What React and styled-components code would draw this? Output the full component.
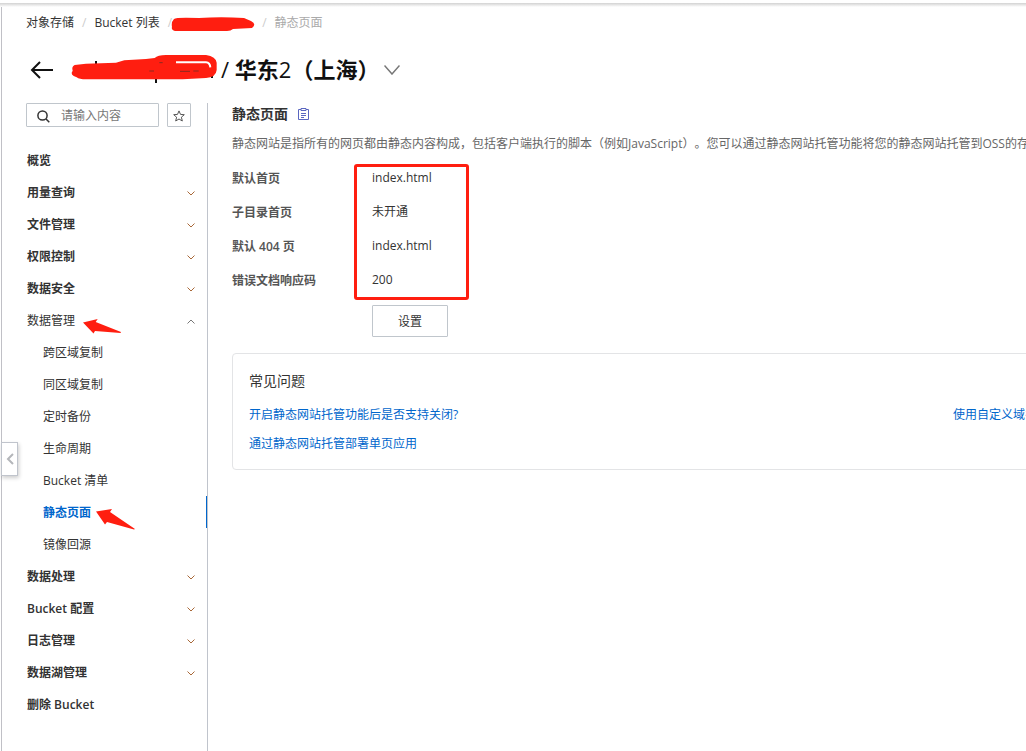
import styled, { createGlobalStyle } from "styled-components";

const GlobalStyle = createGlobalStyle`
  * {
    box-sizing: border-box;
  }
  body {
    margin: 0;
    background: #fff;
    color: #333;
    font-family: "Open Sans", "Noto Sans CJK SC", sans-serif;
    font-size: 12px;
    line-height: 18px;
    text-spacing-trim: space-all;
  }
  button, input {
    font-family: inherit;
    font-size: inherit;
    line-height: inherit;
    color: inherit;
  }
  h1, h2, h3, p, ul, ol, dl, dd {
    margin: 0;
    padding: 0;
  }
  ul, ol {
    list-style: none;
  }
`;

const Page = styled.div`
  position: relative;
  display: flex;
  flex-direction: column;
  min-height: 100vh;
  padding-top: 3px;
  overflow: hidden;
`;

const TopShadow = styled.div`
  height: 4px;
  background: linear-gradient(#d2d2d2, #fff);
`;

const Shell = styled.div`
  flex: 1;
  display: flex;
  flex-direction: column;
  margin-left: 1px;
  padding-left: 24px;
  border-left: 1px solid #c0c0c6;
`;

const Breadcrumb = styled.ol`
  display: flex;
  align-items: center;
  height: 30px;
  padding-top: 2px;
`;

const Crumb = styled.li`
  position: relative;
  color: ${(props) => (props.$current ? "#aaa" : "#333")};

  &:not(:first-child)::before {
    content: "/";
    margin: 0 8px;
    color: #ccc;
  }
`;

const CrumbLink = styled.a`
  color: inherit;
  text-decoration: none;
`;

const HiddenName = styled.span`
  display: inline-block;
  width: ${(props) => props.$width}px;
  height: 1px;
`;

const Header = styled.header`
  display: flex;
  align-items: center;
  height: 66px;
`;

const IconButton = styled.button`
  display: flex;
  align-items: center;
  justify-content: center;
  padding: 0;
  border: none;
  background: none;
  cursor: pointer;
`;

const BackButton = styled(IconButton)`
  width: 32px;
  height: 32px;
  color: #111;
`;

const Title = styled.h1`
  display: flex;
  align-items: center;
  margin-left: 12px;
  margin-right: 5px;
  padding-bottom: 2px;
  font-size: 22px;
  line-height: 32px;
  font-weight: 700;
  color: #111;
`;

const TitleLight = styled.span`
  font-weight: 400;
`;

const Body = styled.div`
  flex: 1;
  display: flex;
`;

const Sidebar = styled.aside`
  flex: 0 0 182px;
  border-right: 1px solid #c0c4cc;
`;

const SearchRow = styled.div`
  display: flex;
  gap: 8px;
  margin-bottom: 17px;
`;

const SearchBox = styled.label`
  display: flex;
  align-items: center;
  gap: 11px;
  width: 133px;
  height: 24px;
  padding-top: 2px;
  padding-left: 10px;
  border: 1px solid #c0c6cc;
  border-radius: 1px;
`;

const SearchInput = styled.input`
  flex: 1;
  min-width: 0;
  padding: 0;
  border: none;
  outline: none;
  background: none;

  &::placeholder {
    color: #777;
    opacity: 1;
  }
`;

const StarButton = styled(IconButton)`
  width: 24px;
  height: 24px;
  padding-top: 1px;
  border: 1px solid #c0c6cc;
  border-radius: 1px;
`;

const NavButton = styled.button`
  display: flex;
  align-items: center;
  justify-content: space-between;
  width: 100%;
  height: 32px;
  padding: 2px 12px 0 1px;
  border: none;
  background: none;
  text-align: left;
  font-weight: ${(props) => (props.$open ? 400 : 600)};
  cursor: pointer;
`;

const NavLink = styled.a`
  display: flex;
  align-items: center;
  height: 32px;
  padding-top: 2px;
  padding-left: ${(props) => (props.$child ? 17 : 1)}px;
  border-right: ${(props) => (props.$active ? "1px solid #06c" : "none")};
  color: ${(props) => (props.$active ? "#06c" : "#333")};
  font-weight: ${(props) => (props.$active || !props.$child ? 600 : 400)};
  text-decoration: none;
`;

const Marked = styled.span`
  position: relative;
`;

const Content = styled.main`
  flex: 1;
  min-width: 0;
  padding-left: 24px;
  overflow: hidden;
`;

const Wide = styled.div`
  width: 1442px;
`;

const SectionTitle = styled.h2`
  display: flex;
  align-items: center;
  gap: 10px;
  height: 22px;
  font-size: 14px;
  font-weight: 600;
`;

const Description = styled.p`
  margin-top: 10px;
  color: #666;
  white-space: nowrap;
`;

const Settings = styled.dl`
  position: relative;
  display: grid;
  grid-template-columns: 140px 1fr;
  row-gap: 15px;
  margin-top: 16px;
`;

const Term = styled.dt`
  padding-top: 1px;
  font-weight: 600;
  color: #555;
`;

const Frame = styled.div`
  position: absolute;
  top: -5px;
  bottom: -10px;
  left: 122px;
  width: 115px;
  border: 3px solid #ff1e10;
  border-radius: 3px;
  pointer-events: none;
`;

const SettingsButton = styled.button`
  display: block;
  width: 76px;
  height: 32px;
  margin: 15px 0 16px 140px;
  padding: 2px 0 0;
  border: 1px solid #c0c6cc;
  border-radius: 1px;
  background: #fff;
  cursor: pointer;
`;

const Faq = styled.section`
  padding: 17px 16px 16px;
  border: 1px solid #e3e4e6;
  border-radius: 4px;
`;

const FaqTitle = styled.h3`
  font-size: 14px;
  line-height: 20px;
  font-weight: 400;
`;

const FaqList = styled.ul`
  display: grid;
  grid-template-columns: 1fr 1fr;
  row-gap: 11px;
  margin-top: 15px;
`;

const FaqLink = styled.a`
  color: #06c;
  text-decoration: none;
`;

const Collapse = styled(IconButton)`
  position: absolute;
  left: 1px;
  top: 442px;
  width: 17px;
  height: 34px;
  border: 1px solid #c0c4cc;
  background: #fff;
  box-shadow: 1px 2px 4px rgba(0, 0, 0, 0.2);
  color: #b4b6ba;
`;

const Mark = styled.svg`
  position: absolute;
  left: ${(props) => props.$left}px;
  top: ${(props) => props.$top}px;
  pointer-events: none;
`;

function Chevron({ width, height, up, color, weight = 1 }) {
  return (
    <svg width={width} height={height} viewBox={`0 0 ${width} ${height}`} fill="none" stroke={color} strokeWidth={weight}>
      <path
        d={
          up
            ? `M.5 ${height - 0.5} L${width / 2} 1 L${width - 0.5} ${height - 0.5}`
            : `M.5 .5 L${width / 2} ${height - 1} L${width - 0.5} .5`
        }
      />
    </svg>
  );
}

function Arrow({ left, top, d }) {
  return (
    <Mark $left={left} $top={top} width="40" height="22" viewBox="0 0 40 22">
      <path d={d} fill="#ff1e10" />
    </Mark>
  );
}

const nav = [
  { name: "概览", link: true },
  { name: "用量查询" },
  { name: "文件管理" },
  { name: "权限控制" },
  { name: "数据安全" },
  {
    name: "数据管理",
    open: true,
    children: ["跨区域复制", "同区域复制", "定时备份", "生命周期", "Bucket 清单", "静态页面", "镜像回源"],
  },
  { name: "数据处理" },
  { name: "Bucket 配置" },
  { name: "日志管理" },
  { name: "数据湖管理" },
  { name: "删除 Bucket", link: true },
];

const settings = [
  ["默认首页", "index.html"],
  ["子目录首页", "未开通"],
  ["默认 404 页", "index.html"],
  ["错误文档响应码", "200"],
];

const active = "静态页面";

function NavItem({ item }) {
  if (item.link) {
    return (
      <li>
        <NavLink href="#">{item.name}</NavLink>
      </li>
    );
  }
  return (
    <li>
      <NavButton type="button" aria-expanded={!!item.open} $open={item.open}>
        <Marked>
          {item.name}
          {item.open && (
            <Arrow left={56} top={7} d="M0 3.500 L14.700 0 L12.700 3 L38 13 L37.500 14 L12 12 L10.500 14.500 Z" />
          )}
        </Marked>
        <Chevron width={8} height={5} up={item.open} color={item.open ? "#777" : "#a86838"} />
      </NavButton>
      {item.children && (
        <ul>
          {item.children.map((child) => (
            <li key={child}>
              <NavLink href="#" $child $active={child === active}>
                <Marked>
                  {child}
                  {child === active && (
                    <Arrow left={53} top={5} d="M0 2.500 L16 0 L14 3 L39 20 L38 20.500 L11 13 L9 15.500 Z" />
                  )}
                </Marked>
              </NavLink>
            </li>
          ))}
        </ul>
      )}
    </li>
  );
}

function App() {
  return (
    <Page>
      <GlobalStyle />
      <TopShadow />
      <Shell>
        <nav aria-label="breadcrumb">
          <Breadcrumb>
            <Crumb><CrumbLink href="#">对象存储</CrumbLink></Crumb>
            <Crumb><CrumbLink href="#">Bucket 列表</CrumbLink></Crumb>
            <Crumb>
              <HiddenName $width={74} />
              <Mark $left={11} $top={2} width="86" height="16" viewBox="0 0 86 16">
                <path
                  d="M3 3 Q5 1 28 2 Q50 .5 73 2 L80 5 Q86 8 81 12 L62 13 Q60 15 56 15 L4 15 Q0 14 1 11 Q0 6 3 3 Z"
                  fill="#ff1e10"
                />
              </Mark>
            </Crumb>
            <Crumb $current>静态页面</Crumb>
          </Breadcrumb>
        </nav>
        <Header>
          <BackButton type="button" aria-label="返回">
            <svg width="24" height="18" viewBox="0 0 24 18" fill="none" stroke="currentColor" strokeWidth="2">
              <path d="M10 1 L2 9 L10 17 M2 9 H23" />
            </svg>
          </BackButton>
          <Title>
            <Marked>
              <HiddenName $width={151} />
              <Mark $left={-4} $top={-3} width="160" height="40" viewBox="0 0 480 120">
                <path d="M90 33 V50 M270 80 V99 M438 70 V84" stroke="#111" strokeWidth="6" />
                <path
                  d="M26 45 L60 41 L150 38 L175 31 L240 27 L266 24 Q275 15 300 15 H420 Q450 20 452 38 V60 Q450 82 420 84 L350 88 H60 Q40 88 32 82 Q10 74 20 62 Q16 50 26 45 Z"
                  fill="#ff1e10"
                />
                <path d="M330 37 H420 Q432 38 433 52" fill="none" stroke="#fff" strokeWidth="6" />
                <path d="M280 38 H290 M342 64 H372 M382 63 H398 M250 63 H264" stroke="#8c2a20" strokeWidth="3" />
              </Mark>
            </Marked>
            <TitleLight>/&nbsp;</TitleLight>
            华东<TitleLight>2</TitleLight>（上海）
          </Title>
          <IconButton type="button" aria-label="切换">
            <Chevron width={16} height={10} color="#777" weight={1.5} />
          </IconButton>
        </Header>
        <Body>
          <Sidebar>
            <SearchRow>
              <SearchBox>
                <svg width="13" height="13" viewBox="0 0 13 13" fill="none" stroke="#333" strokeWidth="1.5">
                  <circle cx="5.500" cy="5.500" r="4.600" />
                  <path d="M9 9 L12.300 12.300" />
                </svg>
                <SearchInput aria-label="搜索" placeholder="请输入内容" />
              </SearchBox>
              <StarButton type="button" aria-label="收藏">
                <svg width="12" height="12" viewBox="0 0 12 12" fill="none" stroke="#555">
                  <path d="M6 .9 L7.500 4.400 L11.300 4.700 L8.400 7.200 L9.300 11 L6 9 L2.700 11 L3.600 7.200 L.7 4.700 L4.500 4.400 Z" />
                </svg>
              </StarButton>
            </SearchRow>
            <nav>
              <ul>
                {nav.map((item) => (
                  <NavItem key={item.name} item={item} />
                ))}
              </ul>
            </nav>
          </Sidebar>
          <Content>
            <Wide>
              <SectionTitle>
                静态页面
                <svg width="11" height="12" viewBox="0 0 11 12" fill="none" stroke="#5a66c0">
                  <path d="M3 1.500 H.5 V11.500 H10.500 V1.500 H8 M3 .5 H8 V2.500 H3 Z M3 5.500 H8 M3 7.500 H8 M3 9.500 H6" />
                </svg>
              </SectionTitle>
              <Description>
                静态网站是指所有的网页都由静态内容构成，包括客户端执行的脚本（例如JavaScript）。您可以通过静态网站托管功能将您的静态网站托管到OSS的存
              </Description>
              <Settings>
                {settings.map(([term, value]) => [
                  <Term key={term}>{term}</Term>,
                  <dd key={term + value}>{value}</dd>,
                ])}
                <Frame />
              </Settings>
              <SettingsButton type="button">设置</SettingsButton>
              <Faq>
                <FaqTitle>常见问题</FaqTitle>
                <FaqList>
                  <li><FaqLink href="#">开启静态网站托管功能后是否支持关闭?</FaqLink></li>
                  <li><FaqLink href="#">使用自定义域名</FaqLink></li>
                  <li><FaqLink href="#">通过静态网站托管部署单页应用</FaqLink></li>
                </FaqList>
              </Faq>
            </Wide>
          </Content>
        </Body>
      </Shell>
      <Collapse type="button" aria-label="收起">
        <svg width="8" height="12" viewBox="0 0 8 12" fill="none" stroke="currentColor" strokeWidth="2">
          <path d="M7 1 L2 6 L7 11" />
        </svg>
      </Collapse>
    </Page>
  );
}

export default App;
